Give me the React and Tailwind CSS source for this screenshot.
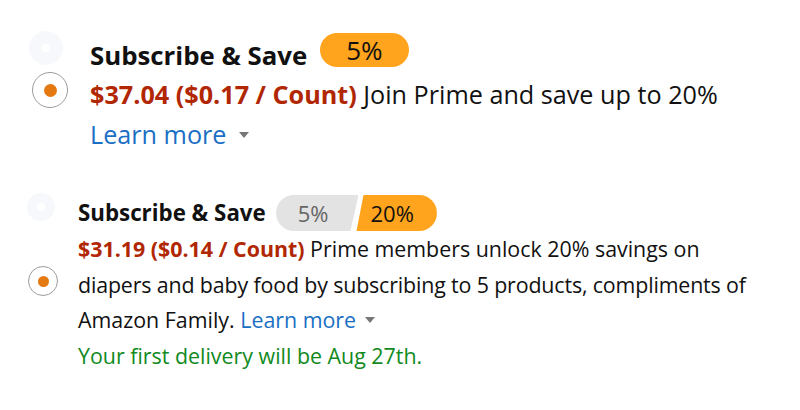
import React from 'react';

function Caret({ className }) {
  return (
    <svg width="10" height="6" viewBox="0 0 10 6" className={className}>
      <path d="M0 0 L10 0 L5 6 Z" fill="#777" />
    </svg>
  );
}

function GhostRadio({ className }) {
  return (
    <div className={`flex items-center justify-center rounded-full bg-[#f6f8fb] ${className}`}>
      <div className="w-[8px] h-[8px] rounded-full bg-white" />
    </div>
  );
}

function Radio({ className, dot }) {
  return (
    <div className={`flex items-center justify-center rounded-full border-[1.5px] border-[#9c9c9c] ${className}`}>
      <div className={`rounded-full bg-[#e47911] ${dot}`} />
    </div>
  );
}

function App() {
  return (
    <div className="w-[800px] h-[410px] bg-white text-[#111] font-['Open_Sans',sans-serif]">
      {/* first option */}
      <div className="flex">
        <div className="w-[90px] shrink-0">
          <GhostRadio className="mt-[31px] ml-[29px] w-[34px] h-[34px]" />
          <Radio className="mt-[7px] ml-[32px] w-[36px] h-[36px]" dot="w-[13px] h-[13px]" />
        </div>
        <div>
          <div className="flex items-start gap-[13px] mt-[33px]">
            <span className="pt-[5px] text-[25.8px] leading-[34px] font-bold">Subscribe &amp; Save</span>
            <span className="h-[34px] rounded-full bg-[#ffa41c] px-[26px] text-[26px] leading-[34px]">5%</span>
          </div>
          <p className="mt-[2px] text-[25.2px] leading-[40px]">
            <span className="font-bold text-[#b12704]">$37.04 ($0.17 / Count)</span> Join Prime and save up to 20%
          </p>
          <p className="text-[25.2px] leading-[40px] text-[#1a6fc4]">
            Learn more <Caret className="inline-block align-[6px] ml-[6px]" />
          </p>
        </div>
      </div>

      {/* second option */}
      <div className="flex mt-[41px]">
        <div className="w-[78px] shrink-0">
          <GhostRadio className="-mt-[2px] ml-[27px] w-[28px] h-[28px]" />
          <Radio className="mt-[45px] ml-[28px] w-[30px] h-[30px]" dot="w-[11px] h-[11px]" />
        </div>
        <div>
          <div className="flex items-start gap-[10px]">
            <span className="text-[22.3px] leading-[36px] font-bold">Subscribe &amp; Save</span>
            <div className="flex h-[36px] text-[22px] leading-[36px]">
              <span className="rounded-l-full bg-[#e3e3e3] pl-[22px] pr-[30px] text-[#666] [clip-path:polygon(0_0,100%_0,calc(100%-8px)_100%,0_100%)]">5%</span>
              <span className="-ml-[2px] rounded-r-full bg-[#ffa41c] pl-[14px] pr-[23px] [clip-path:polygon(7px_0,100%_0,100%_100%,0_100%)]">20%</span>
            </div>
          </div>
          <p className="text-[21.4px] leading-[35.5px]">
            <span className="font-bold text-[#b12704]">$31.19 ($0.14 / Count)</span> Prime members unlock 20% savings on
            <br />
            <span className="tracking-[-0.15px]">diapers and baby food by subscribing to 5 products, compliments of</span>
            <br />
            Amazon Family. <span className="text-[#1a6fc4]">Learn more</span>
            <Caret className="inline-block align-[5px] ml-[9px]" />
          </p>
          <p className="text-[21.4px] leading-[35.5px] text-[#118a1e]">Your first delivery will be Aug 27th.</p>
        </div>
      </div>
    </div>
  );
}

export default App;
